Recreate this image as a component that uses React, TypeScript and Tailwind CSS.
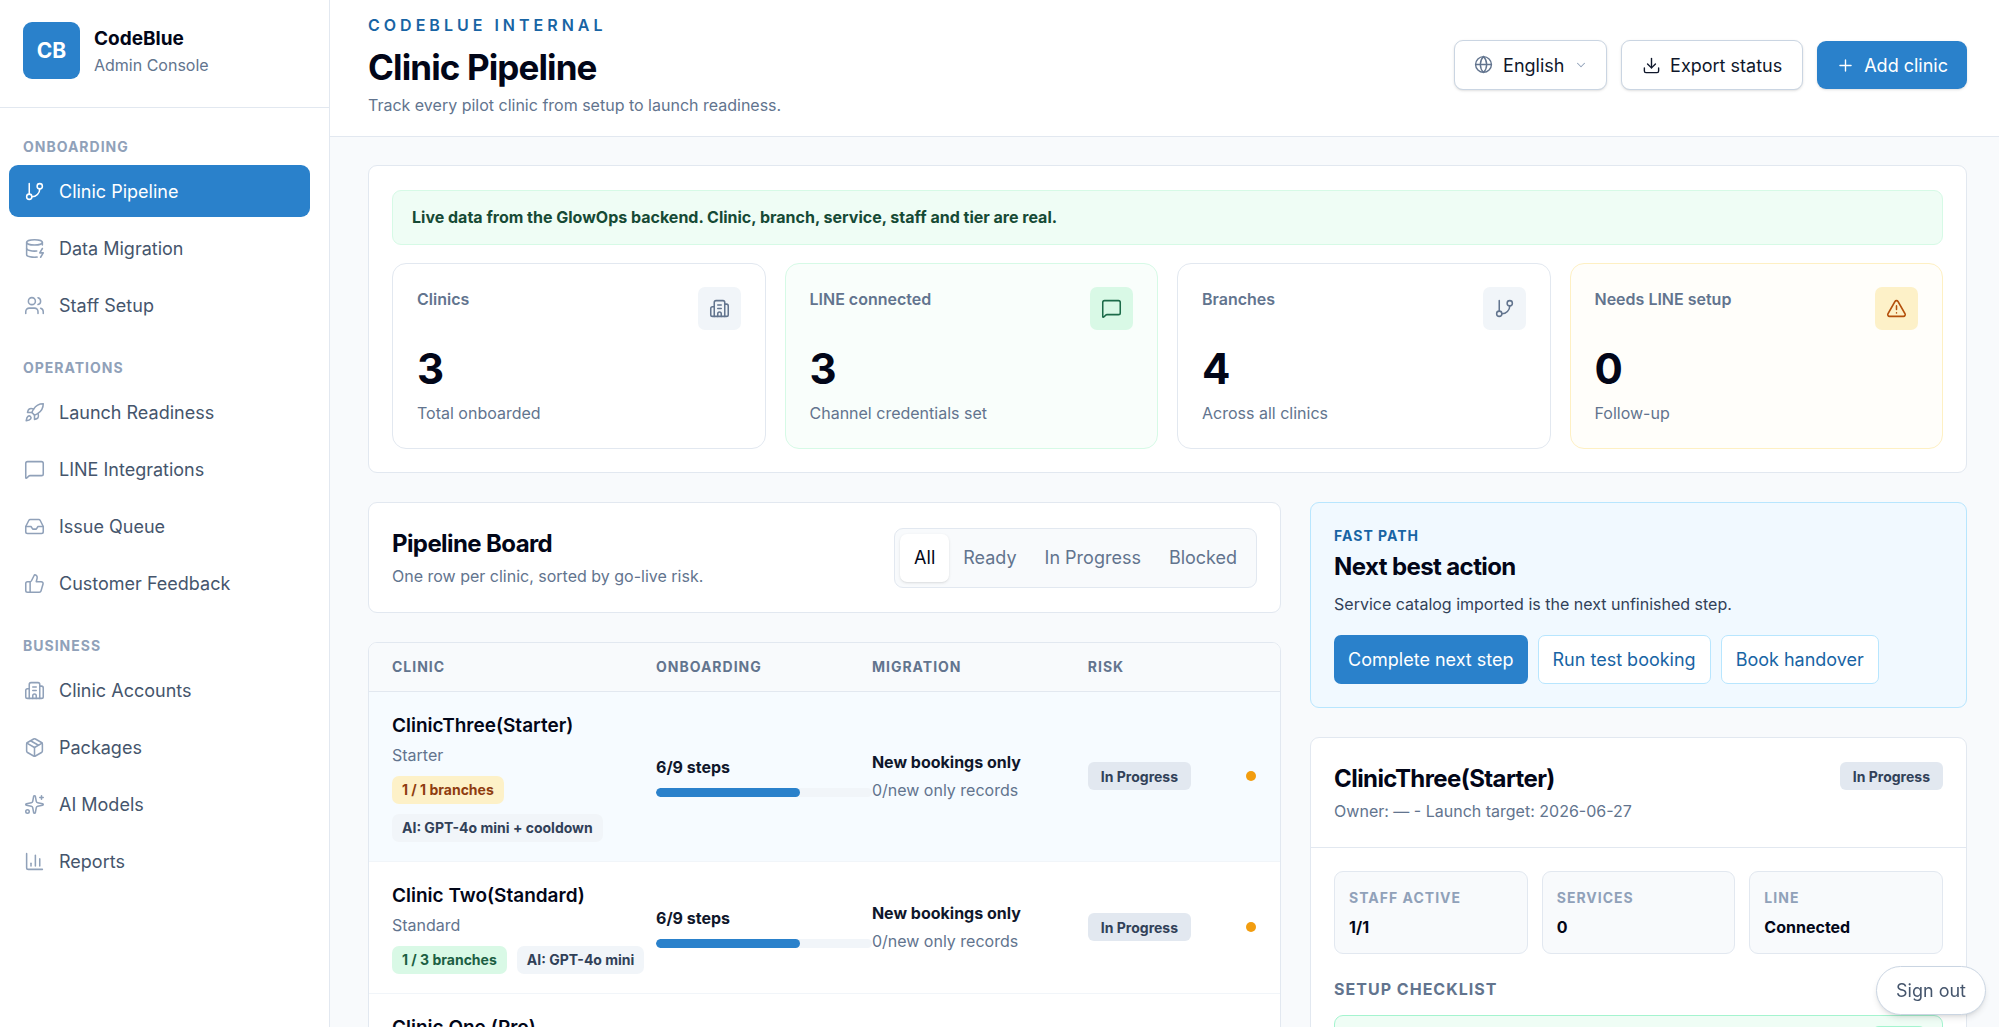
import { useState } from "react"
import {
  Building2,
  ChartColumn,
  ChevronDown,
  DatabaseZap,
  Download,
  GitBranch,
  Globe,
  Inbox,
  MessageSquare,
  Package,
  Plus,
  Rocket,
  Sparkles,
  ThumbsUp,
  TriangleAlert,
  Users,
  type LucideIcon,
} from "lucide-react"

interface NavGroup {
  label: string
  items: { label: string; icon: LucideIcon }[]
}

const STROKE = 1.75

const NAV: NavGroup[] = [
  {
    label: "Onboarding",
    items: [
      { label: "Clinic Pipeline", icon: GitBranch },
      { label: "Data Migration", icon: DatabaseZap },
      { label: "Staff Setup", icon: Users },
    ],
  },
  {
    label: "Operations",
    items: [
      { label: "Launch Readiness", icon: Rocket },
      { label: "LINE Integrations", icon: MessageSquare },
      { label: "Issue Queue", icon: Inbox },
      { label: "Customer Feedback", icon: ThumbsUp },
    ],
  },
  {
    label: "Business",
    items: [
      { label: "Clinic Accounts", icon: Building2 },
      { label: "Packages", icon: Package },
      { label: "AI Models", icon: Sparkles },
      { label: "Reports", icon: ChartColumn },
    ],
  },
]

const TONES = {
  plain: {
    card: "border-slate-200 bg-white",
    icon: "bg-slate-100 text-slate-500",
  },
  green: {
    card: "border-[#d6fae6] bg-[#f9fefb]",
    icon: "bg-[#d9f9e6] text-[#1c6b49]",
  },
  amber: {
    card: "border-[#fef0c3] bg-[#fffefa]",
    icon: "bg-[#fdf1c8] text-[#b4500b]",
  },
}

interface Stat {
  label: string
  value: number
  hint: string
  icon: LucideIcon
  tone: keyof typeof TONES
}

const STATS: Stat[] = [
  { label: "Clinics", value: 3, hint: "Total onboarded", icon: Building2, tone: "plain" },
  { label: "LINE connected", value: 3, hint: "Channel credentials set", icon: MessageSquare, tone: "green" },
  { label: "Branches", value: 4, hint: "Across all clinics", icon: GitBranch, tone: "plain" },
  { label: "Needs LINE setup", value: 0, hint: "Follow-up", icon: TriangleAlert, tone: "amber" },
]

const FILTERS = ["All", "Ready", "In Progress", "Blocked"]

interface Clinic {
  name: string
  tier: string
  branches: string
  atLimit: boolean
  ai: string
  done: number
  total: number
}

const CLINICS: Clinic[] = [
  {
    name: "ClinicThree(Starter)",
    tier: "Starter",
    branches: "1 / 1 branches",
    atLimit: true,
    ai: "AI: GPT-4o mini + cooldown",
    done: 6,
    total: 9,
  },
  {
    name: "Clinic Two(Standard)",
    tier: "Standard",
    branches: "1 / 3 branches",
    atLimit: false,
    ai: "AI: GPT-4o mini",
    done: 6,
    total: 9,
  },
  {
    name: "Clinic One (Pro)",
    tier: "Pro",
    branches: "2 / 5 branches",
    atLimit: false,
    ai: "AI: GPT-4o",
    done: 6,
    total: 9,
  },
]

const FACTS = [
  { label: "Staff active", value: "1/1" },
  { label: "Services", value: "0" },
  { label: "LINE", value: "Connected" },
]

function StatusBadge({ children }: { children: string }) {
  return (
    <span className="inline-flex h-7 items-center rounded-md bg-slate-200 px-[13px] text-[14px] font-bold whitespace-nowrap text-slate-700">
      {children}
    </span>
  )
}

function Sidebar() {
  const [active, setActive] = useState("Clinic Pipeline")

  return (
    <aside className="w-[330px] shrink-0 overflow-hidden border-r border-slate-200 bg-white">
      <div className="flex h-[108px] gap-[14px] border-b border-slate-200 px-[23px] pt-[22px]">
        <div className="flex size-[57px] items-center justify-center rounded-[9px] bg-[#2a81cb] text-[21px] font-bold text-white">
          CB
        </div>
        <div className="pt-[3px]">
          <div className="text-[19px] leading-7 font-bold text-slate-950">CodeBlue</div>
          <div className="text-[16px] leading-6 text-slate-500">Admin Console</div>
        </div>
      </div>

      <nav className="space-y-[25px] pt-[27px] pr-[19px] pl-[9px]">
        {NAV.map((group) => (
          <div key={group.label}>
            <h2 className="mb-[6px] px-[14px] text-[14px] leading-6 font-bold tracking-[1px] text-slate-400 uppercase">
              {group.label}
            </h2>
            <div className="flex flex-col gap-[5px]">
              {group.items.map(({ label, icon: Icon }) => {
                const isActive = label === active
                return (
                  <button
                    key={label}
                    onClick={() => setActive(label)}
                    className={`flex h-[52px] items-center gap-[14px] rounded-[9px] px-[15px] text-left text-[18px] ${
                      isActive ? "bg-[#2a81cb] text-white" : "text-slate-600 hover:bg-slate-50"
                    }`}
                  >
                    <Icon size={21} strokeWidth={STROKE} className={isActive ? "text-white" : "text-slate-400"} />
                    {label}
                  </button>
                )
              })}
            </div>
          </div>
        ))}
      </nav>
    </aside>
  )
}

function Header() {
  return (
    <header className="flex h-[137px] shrink-0 items-start justify-between border-b border-slate-200 bg-white pr-8 pl-[38px]">
      <div className="pt-[13px]">
        <p className="text-[16px] leading-6 font-semibold tracking-[4px] text-[#1864a4] uppercase">
          CodeBlue Internal
        </p>
        <h1 className="mt-[9px] text-[35px] leading-[42px] font-bold tracking-tight text-slate-950">
          Clinic Pipeline
        </h1>
        <p className="mt-[5px] text-[16px] leading-6 text-slate-500">
          Track every pilot clinic from setup to launch readiness.
        </p>
      </div>
      <div className="flex items-center gap-[14px] pt-[40px] text-[18px]">
        <div className="relative text-slate-900">
          <Globe
            size={19}
            strokeWidth={STROKE}
            className="pointer-events-none absolute top-[15px] left-[20px] text-slate-500"
          />
          <select
            aria-label="Language"
            className="h-[50px] appearance-none rounded-[9px] border border-slate-300 bg-white pr-[41px] pl-[48px] shadow-sm"
          >
            <option>English</option>
            <option>Thai</option>
          </select>
          <ChevronDown
            size={14}
            strokeWidth={STROKE}
            className="pointer-events-none absolute top-[18px] right-[19px] text-slate-400"
          />
        </div>
        <button className="flex h-[50px] items-center gap-[9px] rounded-[9px] border border-slate-300 bg-white px-[20px] text-slate-900 shadow-sm">
          <Download size={19} strokeWidth={STROKE} />
          Export status
        </button>
        <button className="flex h-[48px] items-center gap-[9px] rounded-[9px] bg-[#2a81cb] px-[19px] text-white shadow-sm">
          <Plus size={19} strokeWidth={STROKE} />
          Add clinic
        </button>
      </div>
    </header>
  )
}

function StatCard({ stat }: { stat: Stat }) {
  const tone = TONES[stat.tone]
  const Icon = stat.icon
  return (
    <div className={`rounded-[14px] border px-[24px] py-[23px] ${tone.card}`}>
      <div className="flex items-start justify-between">
        <span className="text-[16px] leading-6 font-semibold text-slate-500">{stat.label}</span>
        <span className={`flex size-[43px] items-center justify-center rounded-[7px] ${tone.icon}`}>
          <Icon size={21} strokeWidth={STROKE} />
        </span>
      </div>
      <div className="mt-[14px] text-[42px] leading-[50px] font-bold text-slate-950">{stat.value}</div>
      <div className="mt-[7px] text-[16px] leading-6 text-slate-500">{stat.hint}</div>
    </div>
  )
}

function Overview() {
  return (
    <section className="rounded-[9px] border border-slate-200 bg-white px-[23px] pt-[24px] pb-[23px]">
      <p className="rounded-[9px] border border-[#d6fae6] bg-[#effdf5] px-[19px] py-[14px] text-[16px] leading-[25px] font-bold text-[#164a35]">
        Live data from the GlowOps backend. Clinic, branch, service, staff and tier are real.
      </p>
      <div className="mt-[18px] grid grid-cols-4 gap-[19px]">
        {STATS.map((stat) => (
          <StatCard key={stat.label} stat={stat} />
        ))}
      </div>
    </section>
  )
}

function BoardHeader() {
  const [filter, setFilter] = useState("All")
  return (
    <section className="flex items-center justify-between rounded-[9px] border border-slate-200 bg-white px-[23px] py-[24px]">
      <div>
        <h2 className="text-[24px] leading-[34px] font-bold tracking-tight text-slate-950">Pipeline Board</h2>
        <p className="mt-[3px] text-[16px] leading-6 text-slate-500">One row per clinic, sorted by go-live risk.</p>
      </div>
      <div className="flex rounded-[9px] border border-slate-200 bg-slate-50 p-[5px]">
        {FILTERS.map((name) => (
          <button
            key={name}
            onClick={() => setFilter(name)}
            className={`h-[48px] rounded-[7px] px-[14px] text-[18px] ${
              name === filter ? "bg-white text-slate-950 shadow-sm" : "text-slate-500"
            }`}
          >
            {name}
          </button>
        ))}
      </div>
    </section>
  )
}

function PipelineTable() {
  return (
    <section className="overflow-hidden rounded-[9px] border border-slate-200 bg-white">
      <table className="w-full table-fixed text-left">
        <thead className="bg-slate-50 text-[14px] leading-6 tracking-[1px] text-slate-500 uppercase">
          <tr className="h-[48px] border-b border-slate-200">
            <th className="w-[31.5%] pl-[23px] font-bold">Clinic</th>
            <th className="w-[23.7%] font-bold">Onboarding</th>
            <th className="w-[23.7%] font-bold">Migration</th>
            <th className="pr-[23px] font-bold">Risk</th>
          </tr>
        </thead>
        <tbody>
          {CLINICS.map((clinic, i) => (
            <tr key={clinic.name} className={`border-b border-slate-100 ${i === 0 ? "bg-[#f6fbff]" : "bg-white"}`}>
              <td className="py-[19px] pl-[23px]">
                <div className="text-[19px] leading-[30px] font-semibold text-slate-950">{clinic.name}</div>
                <div className="mt-[2px] text-[16px] leading-6 text-slate-500">{clinic.tier}</div>
                <div className="mt-[9px] flex flex-wrap gap-[10px] text-[14px] font-bold whitespace-nowrap">
                  <span
                    className={`flex h-7 items-center rounded-[7px] px-[10px] ${
                      clinic.atLimit ? "bg-[#fdf1c8] text-[#8f3d10]" : "bg-[#d9f9e6] text-[#1c5f43]"
                    }`}
                  >
                    {clinic.branches}
                  </span>
                  <span className="flex h-7 items-center rounded-[7px] bg-slate-100 px-[10px] text-slate-700">
                    {clinic.ai}
                  </span>
                </div>
              </td>
              <td>
                <div className="text-[16px] leading-6 font-bold text-slate-900">
                  {clinic.done}/{clinic.total} steps
                </div>
                <div className="mt-[9px] h-[9px] overflow-hidden rounded-full bg-slate-100">
                  <div
                    className="h-full rounded-full bg-[#2a81cb]"
                    style={{ width: `${(clinic.done / clinic.total) * 100}%` }}
                  />
                </div>
              </td>
              <td>
                <div className="text-[16px] leading-6 font-bold text-slate-900">New bookings only</div>
                <div className="mt-[4px] text-[16px] leading-6 text-slate-500">0/new only records</div>
              </td>
              <td className="pr-[24px]">
                <div className="flex items-center justify-between">
                  <StatusBadge>In Progress</StatusBadge>
                  <span className="size-[10px] rounded-full bg-[#f29d0f]" />
                </div>
              </td>
            </tr>
          ))}
        </tbody>
      </table>
    </section>
  )
}

function NextAction() {
  return (
    <section className="rounded-[9px] border border-sky-200 bg-[#f1f9ff] p-[23px]">
      <p className="text-[14px] leading-5 font-bold tracking-[1px] text-[#1864a4] uppercase">Fast path</p>
      <h2 className="mt-[5px] text-[24px] leading-8 font-bold tracking-tight text-slate-950">Next best action</h2>
      <p className="mt-[9px] text-[16px] leading-6 text-slate-700">
        Service catalog imported is the next unfinished step.
      </p>
      <div className="mt-[19px] flex flex-wrap gap-[10px] text-[18px]">
        <button className="h-[49px] rounded-[7px] bg-[#2a81cb] px-[14px] text-white">Complete next step</button>
        <button className="h-[49px] rounded-[7px] border border-sky-200 bg-white px-[14px] text-[#1864a4]">
          Run test booking
        </button>
        <button className="h-[49px] rounded-[7px] border border-sky-200 bg-white px-[14px] text-[#1864a4]">
          Book handover
        </button>
      </div>
    </section>
  )
}

function ClinicDetail() {
  return (
    <section className="rounded-[9px] border border-slate-200 bg-white">
      <div className="flex items-start justify-between border-b border-slate-200 px-[23px] py-[24px]">
        <div>
          <h2 className="text-[24px] leading-[34px] font-bold tracking-tight text-slate-950">ClinicThree(Starter)</h2>
          <p className="mt-[3px] text-[16px] leading-6 text-slate-500">Owner: — - Launch target: 2026-06-27</p>
        </div>
        <StatusBadge>In Progress</StatusBadge>
      </div>
      <div className="p-[23px]">
        <dl className="grid grid-cols-3 gap-[14px]">
          {FACTS.map((fact) => (
            <div key={fact.label} className="rounded-[9px] border border-slate-200 bg-slate-50 p-[14px]">
              <dt className="text-[14px] leading-6 font-bold tracking-[1px] text-slate-400 uppercase">{fact.label}</dt>
              <dd className="mt-[5px] text-[16px] leading-6 font-bold text-slate-950">{fact.value}</dd>
            </div>
          ))}
        </dl>
        <h3 className="mt-[23px] text-[16px] leading-6 font-bold tracking-[1px] text-slate-500 uppercase">
          Setup checklist
        </h3>
        <div className="mt-[14px] flex items-center justify-between rounded-[9px] border border-emerald-200 bg-[#effdf5] px-[16px] py-[10px] text-[16px] text-slate-900">
          Clinic profile
          <span className="rounded-[7px] bg-emerald-200 px-[9px] text-[14px] leading-7 font-bold text-emerald-800">
            Done
          </span>
        </div>
      </div>
    </section>
  )
}

export default function App() {
  return (
    <div className="flex h-screen bg-slate-50 font-['Inter',sans-serif] text-slate-900">
      <Sidebar />
      <div className="flex min-w-0 flex-1 flex-col">
        <Header />
        <main className="min-h-0 flex-1 overflow-y-auto pt-7 pr-8 pb-10 pl-[38px] [scrollbar-width:none]">
          <Overview />
          <div className="mt-[29px] grid grid-cols-[1.39fr_1fr] items-start gap-[29px]">
            <div className="min-w-0 space-y-[29px]">
              <BoardHeader />
              <PipelineTable />
            </div>
            <div className="min-w-0 space-y-[29px]">
              <NextAction />
              <ClinicDetail />
            </div>
          </div>
        </main>
      </div>
      <button className="fixed right-[13px] bottom-[12px] h-[49px] rounded-full border border-slate-300 bg-white px-[19px] text-[18px] text-slate-600 shadow-md">
        Sign out
      </button>
    </div>
  )
}
